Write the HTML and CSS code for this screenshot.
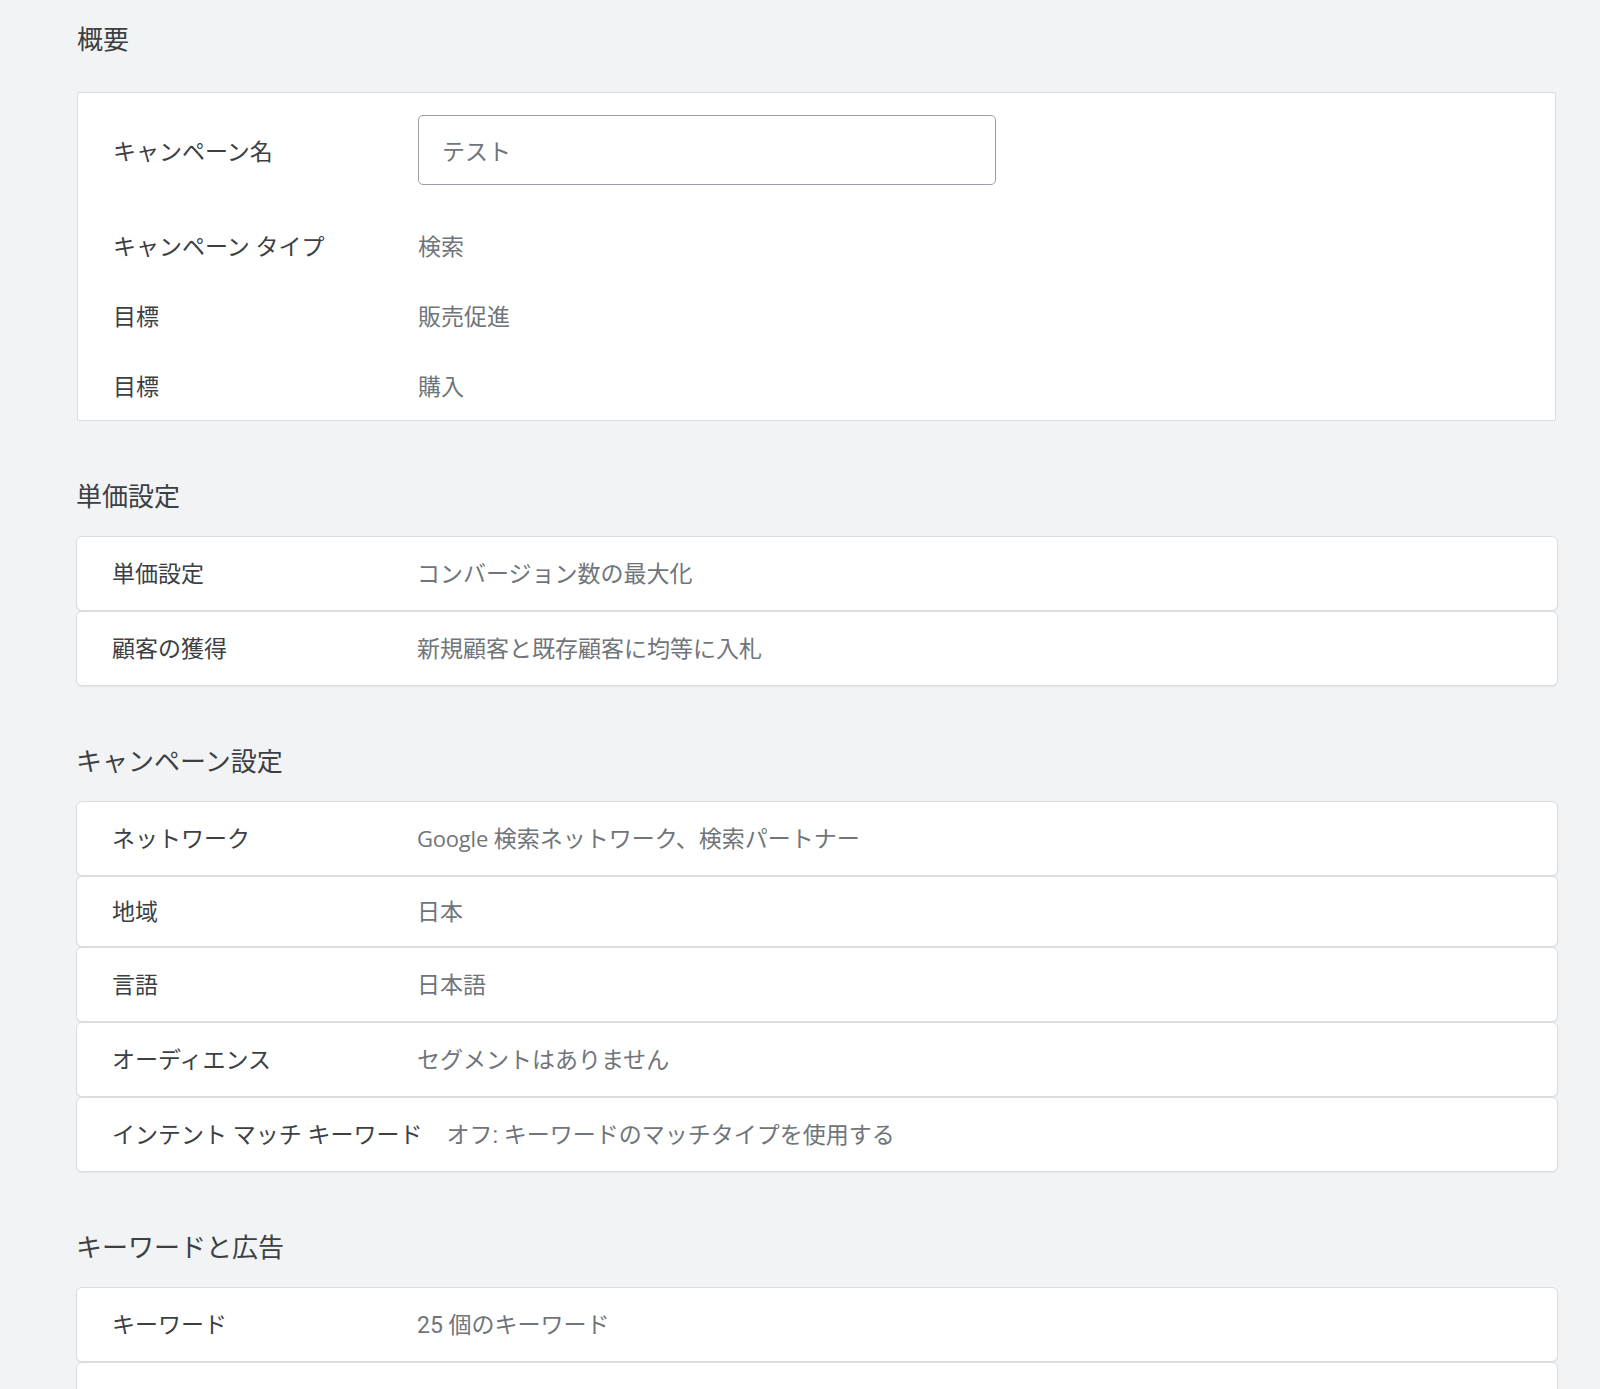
FILE: index.html
```html
<!DOCTYPE html>
<html lang="ja">
<head>
<meta charset="utf-8">
<title>キャンペーンの概要</title>
<link rel="stylesheet" href="styles.css">
</head>
<body>
<main class="page">
  <section class="section section--first">
    <h2 class="section-title">概要</h2>
    <div class="summary-card">
      <div class="summary-row summary-row--input">
        <div class="label">キャンペーン名</div>
        <div class="input-box"><span class="input-text">テスト</span></div>
      </div>
      <div class="summary-row">
        <div class="label">キャンペーン タイプ</div>
        <div class="value">検索</div>
      </div>
      <div class="summary-row">
        <div class="label">目標</div>
        <div class="value">販売促進</div>
      </div>
      <div class="summary-row">
        <div class="label">目標</div>
        <div class="value">購入</div>
      </div>
    </div>
  </section>

  <section class="section">
    <h2 class="section-title">単価設定</h2>
    <div class="row-list">
      <div class="row-card">
        <div class="label">単価設定</div>
        <div class="value">コンバージョン数の最大化</div>
      </div>
      <div class="row-card">
        <div class="label">顧客の獲得</div>
        <div class="value">新規顧客と既存顧客に均等に入札</div>
      </div>
    </div>
  </section>

  <section class="section">
    <h2 class="section-title">キャンペーン設定</h2>
    <div class="row-list">
      <div class="row-card">
        <div class="label">ネットワーク</div>
        <div class="value"><span class="latin">Google</span> 検索ネットワーク、検索パートナー</div>
      </div>
      <div class="row-card row-card--short">
        <div class="label">地域</div>
        <div class="value">日本</div>
      </div>
      <div class="row-card">
        <div class="label">言語</div>
        <div class="value">日本語</div>
      </div>
      <div class="row-card">
        <div class="label">オーディエンス</div>
        <div class="value">セグメントはありません</div>
      </div>
      <div class="row-card">
        <div class="label">インテント マッチ キーワード</div>
        <div class="value">オフ: キーワードのマッチタイプを使用する</div>
      </div>
    </div>
  </section>

  <section class="section">
    <h2 class="section-title">キーワードと広告</h2>
    <div class="row-list">
      <div class="row-card">
        <div class="label">キーワード</div>
        <div class="value">25 個のキーワード</div>
      </div>
      <div class="row-card"></div>
    </div>
  </section>
</main>
</body>
</html>
```

FILE: styles.css
```css
html, body {
  margin: 0;
  padding: 0;
  background: #f1f3f4;
}

body {
  font-family: Roboto, "Noto Sans CJK JP", "Noto Sans", sans-serif;
  color: #3c4043;
}

.page {
  padding: 25px 42px 40px 76px;
}

.section {
  margin-top: 61px;
}

.section--first {
  margin-top: 0;
}

.section-title {
  margin: 0 0 24px 0;
  font-size: 26px;
  line-height: 30px;
  font-weight: 400;
  color: #3c4043;
}

.section--first .section-title {
  margin-bottom: 37px;
  padding-left: 1px;
}

.label {
  flex: 0 0 auto;
  min-width: 281px;
  margin-right: 24px;
  font-size: 23px;
  color: #3c4043;
  white-space: nowrap;
}

.value {
  font-size: 23px;
  color: #70757a;
  white-space: nowrap;
}

.latin {
  font-family: "Open Sans", Roboto, sans-serif;
  font-size: 22px;
  letter-spacing: -0.2px;
}

/* Summary card */
.summary-card {
  margin-left: 1px;
  margin-right: 2px;
  background: #ffffff;
  border: 1px solid #dadce0;
  border-radius: 2px;
}

.summary-row {
  display: flex;
  align-items: center;
  height: 70px;
  padding: 0 35px;
}

.summary-row--input {
  height: auto;
  padding-top: 22px;
  padding-bottom: 25px;
}

.input-box {
  box-sizing: border-box;
  width: 578px;
  height: 70px;
  border: 1px solid #9aa0a6;
  border-radius: 5px;
  display: flex;
  align-items: center;
  padding-left: 23px;
}

.input-text {
  font-size: 23px;
  color: #70757a;
}

/* Row cards */
.row-list {
  display: flex;
  flex-direction: column;
}

.row-card {
  box-sizing: border-box;
  display: flex;
  align-items: center;
  height: 75px;
  padding: 0 35px 4px 35px;
  background: #ffffff;
  border: 1px solid #dadce0;
  border-radius: 6px;
  box-shadow: 0 1px 1px rgba(60, 64, 67, 0.08);
}

.row-card--short {
  height: 71px;
}
```
